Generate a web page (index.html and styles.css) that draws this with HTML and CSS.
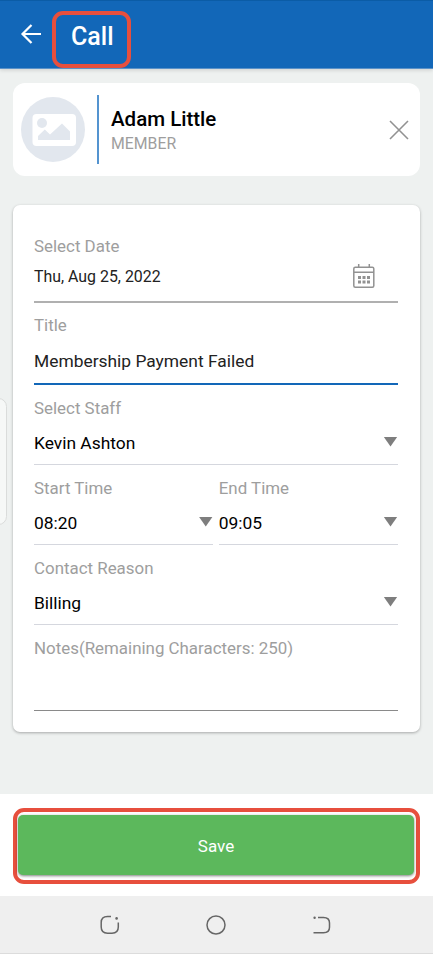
FILE: index.html
```
<!DOCTYPE html>
<html lang="en">
<head>
  <meta charset="UTF-8">
  <title>Call</title>
  <link rel="stylesheet" href="styles.css">
</head>
<body>

<header class="header">
  <svg class="back" width="22" height="22" viewBox="0 0 22 22">
    <path d="M21 11H2.500M11.500 2L2.500 11l9 9"/>
  </svg>
  <h1 class="title">Call</h1>
</header>

<main class="content">
  <section class="member">
    <svg class="avatar" width="64" height="65" viewBox="0 0 64 65">
      <ellipse cx="32" cy="32.5" rx="32" ry="32.5" fill="#e2e7ee"/>
      <rect x="11.5" y="17" width="43.5" height="32" rx="4" fill="#fff"/>
      <circle cx="21" cy="26" r="5" fill="#e2e7ee"/>
      <path d="M17 43v-4l6.8-6.5 5.2 5L41 26.5l8 8V43z" fill="#e2e7ee"/>
    </svg>
    <div class="divider"></div>
    <div class="person">
      <div class="name">Adam Little</div>
      <div class="role">MEMBER</div>
    </div>
    <svg class="close" width="20" height="20" viewBox="0 0 20 20">
      <path d="M1 1l18 18M19 1L1 19"/>
    </svg>
  </section>

  <form class="form">
    <div class="field date">
      <label>Select Date</label>
      <div class="value">
        <span class="text">Thu, Aug 25, 2022</span>
        <svg class="calendar" width="24" height="26" viewBox="0 0 24 26">
          <rect x="1.8" y="4.3" width="20" height="20" rx="1.5"/>
          <path d="M2 9.3h20M6.7 1v3.500M17.300 1v3.500"/>
          <path class="dots" d="M6 13h3v3H6zM10.500 13h3v3h-3zM15 13h3v3h-3zM6 17.500h3v3H6zM10.500 17.500h3v3h-3zM15 17.500h3v3h-3z"/>
        </svg>
      </div>
    </div>

    <div class="field subject">
      <label>Title</label>
      <div class="value"><span class="text">Membership Payment Failed</span></div>
    </div>

    <div class="field select staff">
      <label>Select Staff</label>
      <div class="value"><span class="text">Kevin Ashton</span><span class="arrow"></span></div>
    </div>

    <div class="times">
      <div class="field select">
        <label>Start Time</label>
        <div class="value"><span class="text">08:20</span><span class="arrow"></span></div>
      </div>
      <div class="field select">
        <label>End Time</label>
        <div class="value"><span class="text">09:05</span><span class="arrow"></span></div>
      </div>
    </div>

    <div class="field select">
      <label>Contact Reason</label>
      <div class="value"><span class="text">Billing</span><span class="arrow"></span></div>
    </div>

    <div class="field notes">
      <label>Notes(Remaining Characters: 250)</label>
    </div>
  </form>

  <div class="edge-handle"></div>
</main>

<footer class="footer">
  <div class="save-outline">
    <button type="button" class="save">Save</button>
  </div>
</footer>

<nav class="navbar">
  <svg width="22" height="22" viewBox="0 0 22 22">
    <path d="M12 2.500H8.500Q2.200 2.500 2.200 8.500V13Q2.200 19.200 8.500 19.200H13Q19.300 19.200 19.300 13V8.500"/>
    <circle class="dot" cx="17.600" cy="4.400" r="1.300"/>
  </svg>
  <svg width="22" height="22" viewBox="0 0 22 22">
    <circle cx="11" cy="11" r="9"/>
  </svg>
  <svg width="22" height="22" viewBox="0 0 22 22">
    <path d="M7 3.500h5.500Q18.500 3.500 18.500 9v4.300Q18.500 18.800 12.500 18.800H2.500"/>
    <circle class="dot" cx="3.600" cy="3.700" r="1.200"/>
  </svg>
</nav>

</body>
</html>
```

FILE: styles.css
```
* {
  box-sizing: border-box;
}

body {
  margin: 0;
  height: 954px;
  display: flex;
  flex-direction: column;
  background: #eef1f0;
  font-family: Roboto, sans-serif;
  font-size: 17px;
  overflow: hidden;
}

.header {
  height: 69px;
  padding: 10px 0 0 20px;
  display: flex;
  align-items: flex-start;
  background: #1267b8;
  border-top: 1px solid #0b5ca6;
  border-bottom: 1px solid #5b92c8;
  box-shadow: 0 1px 4px rgba(0,0,0,0.15);
}

.back {
  margin-top: 12px;
  fill: none;
  stroke: white;
  stroke-width: 2.2;
}

.title {
  width: 79px;
  height: 57px;
  margin: 0 0 0 10px;
  padding-left: 15px;
  border: 4px solid #e74f3d;
  border-radius: 11px;
  color: white;
  font-size: 25px;
  font-weight: 500;
  line-height: 43px;
}

.content {
  position: relative;
  height: 725px;
  padding: 14px 13.5px 0 12.5px;
}

.member {
  height: 93px;
  padding: 0 11px 0 8.5px;
  display: flex;
  align-items: center;
  background: white;
  border-radius: 12px;
}

.divider {
  width: 2px;
  height: 69px;
  margin: 0 12px;
  background: #5494d0;
}

.person {
  flex: 1;
  padding-top: 4px;
}

.name {
  font-size: 20.5px;
  font-weight: 500;
  line-height: 25px;
}

.role {
  color: #9e9e9e;
  font-size: 15.8px;
  line-height: 24px;
}

.close {
  fill: none;
  stroke: #929292;
  stroke-width: 1.6;
}

.form {
  height: 527px;
  margin-top: 29px;
  padding: 20px 22px 0 21.5px;
  background: white;
  border-radius: 7px;
  box-shadow: 0 1px 3px rgba(0,0,0,0.3);
}

.field {
  height: 80px;
  padding-top: 13px;
  border-bottom: 1px solid #d5d7de;
}

.field label {
  display: block;
  color: #9e9e9e;
  font-size: 16.9px;
  line-height: 20px;
}

.value {
  display: flex;
  align-items: center;
  justify-content: space-between;
  height: 24px;
  margin-top: 13px;
  color: #000;
  font-size: 17.4px;
}

.date {
  height: 78px;
  padding-top: 11px;
  border-bottom: 2px solid #b0b0b0;
}

.date .value {
  height: 26px;
  margin-top: 7px;
  padding-right: 22px;
  color: #222;
  font-size: 15.9px;
}

.calendar {
  fill: none;
  stroke: #929292;
  stroke-width: 1.5;
}

.calendar .dots {
  fill: #929292;
  stroke: none;
}

.subject {
  height: 82px;
  padding-top: 12px;
  border-bottom: 2px solid #1267b8;
}

.subject .value {
  margin-top: 14px;
  color: #222;
}

.arrow {
  width: 14px;
  height: 10px;
  margin-top: -3px;
  background: #7e7e7e;
  clip-path: polygon(0 0, 100% 0, 50% 100%);
}

.times {
  display: flex;
  gap: 6px;
}

.times .field {
  flex: 1;
}

.notes {
  height: 86px;
  border-bottom: 1px solid #8a8a8a;
}

/* side panel handle peeking in from the left edge */
.edge-handle {
  position: absolute;
  left: -10px;
  top: 329px;
  width: 17px;
  height: 127px;
  background: #f6f8f7;
  border: 1px solid #dadcdb;
  border-radius: 10px;
}

.footer {
  height: 102px;
  padding: 14px 13px 0;
  background: white;
}

.save-outline {
  height: 76px;
  padding: 3px 2px 0 1px;
  border: 4px solid #e74f3d;
  border-radius: 11px;
}

.save {
  display: block;
  width: 100%;
  height: 60px;
  padding: 2px 0 0;
  border: none;
  border-radius: 5px;
  background: #5cb85c;
  color: white;
  font-family: inherit;
  font-size: 17px;
  box-shadow: 0 1px 3px rgba(0,0,0,0.5);
}

.navbar {
  height: 58px;
  padding: 0 100px 0 99px;
  display: flex;
  align-items: center;
  justify-content: space-between;
  background: #efefef;
  border-bottom: 1px solid #dcdcdc;
}

.navbar svg {
  fill: none;
  stroke: #666;
  stroke-width: 1.5;
}

.navbar .dot {
  fill: #666;
  stroke: none;
}
```
